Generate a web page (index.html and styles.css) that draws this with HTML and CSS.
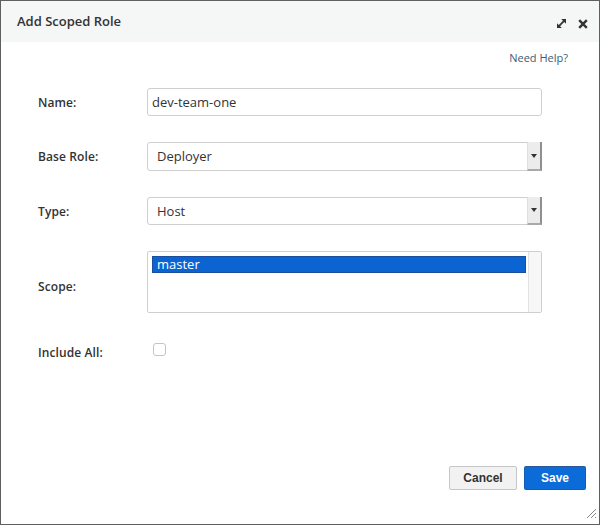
FILE: index.html
```html
<!DOCTYPE html>
<html>
<head>
<meta charset="utf-8">
<title>Add Scoped Role</title>
<link rel="stylesheet" href="styles.css">
</head>
<body>
<div class="dialog">
  <div class="header">
    <div class="title">Add Scoped Role</div>
    <div class="tools">
      <svg class="icon" width="11" height="11" viewBox="0 0 11 11">
        <path d="M2.2 8.8 L8.8 2.2" stroke="#333" stroke-width="1.8"/>
        <polygon points="5.2,1 10,1 10,5.8" fill="#333"/>
        <polygon points="1,5.2 1,10 5.8,10" fill="#333"/>
      </svg>
      <svg class="icon" width="10" height="10" viewBox="0 0 10 10">
        <path d="M1.2 1.2 L8.8 8.8 M8.8 1.2 L1.2 8.8" stroke="#333" stroke-width="2.4"/>
      </svg>
    </div>
  </div>
  <div class="body">
    <div class="help">Need Help?</div>
    <div class="form">
      <div class="label">Name:</div>
      <div class="field input">dev-team-one</div>

      <div class="label">Base Role:</div>
      <div class="field select">
        <span class="value">Deployer</span>
        <span class="arrow"><span class="tri"></span></span>
      </div>

      <div class="label">Type:</div>
      <div class="field select">
        <span class="value">Host</span>
        <span class="arrow"><span class="tri"></span></span>
      </div>

      <div class="label scope">Scope:</div>
      <div class="field listbox">
        <div class="options">
          <div class="option selected">master</div>
        </div>
        <div class="track"></div>
      </div>

      <div class="label include">Include All:</div>
      <div class="checkrow"><span class="checkbox"></span></div>
    </div>
  </div>
  <div class="footer">
    <button class="btn cancel">Cancel</button>
    <button class="btn save">Save</button>
    <svg class="grip" width="12" height="12" viewBox="0 0 12 12">
      <path d="M11 2 L2 11 M11 6 L6 11 M11 10 L10 11" stroke="#8a8a8a" stroke-width="1"/>
    </svg>
  </div>
</div>
</body>
</html>
```

FILE: styles.css
```css
* { box-sizing: border-box; }

html, body {
  margin: 0;
  padding: 0;
  background: #ffffff;
}

body {
  font-family: "Open Sans", "Liberation Sans", sans-serif;
  color: #333333;
}

.dialog {
  width: 600px;
  height: 525px;
  border: 1px solid #5f5f5f;
  display: flex;
  flex-direction: column;
  background: #ffffff;
}

.header {
  height: 41px;
  background: #f5f6f6;
  display: flex;
  align-items: center;
  justify-content: space-between;
  padding: 0 11px 0 16px;
  flex: none;
}

.title {
  font-size: 13px;
  font-weight: 600;
  color: #333333;
  margin-top: -1px;
}

.tools {
  display: flex;
  align-items: center;
  gap: 11px;
  margin-top: 4px;
}

.icon { display: block; }

.body {
  flex: 1;
  padding: 9px 31px 0 37px;
}

.help {
  text-align: right;
  font-size: 11px;
  line-height: 14px;
  color: #3d5b79;
}

.form {
  margin-top: 23px;
  display: grid;
  grid-template-columns: 109px 395px;
  grid-template-rows: 28px 29px 28px 62px 24px;
  row-gap: 26px;
  align-items: center;
}

.label {
  font-size: 12px;
  font-weight: 600;
  color: #333333;
  letter-spacing: 0.1px;
}

.label.scope { padding-top: 9px; }

.label.include { padding-top: 2px; }

.field {
  height: 100%;
  border: 1px solid #cfcfcf;
  border-radius: 3px;
  font-size: 13px;
  color: #333333;
  background: #ffffff;
}

.input {
  display: flex;
  align-items: center;
  padding-left: 4px;
  padding-bottom: 1px;
}

.select {
  display: flex;
  align-items: stretch;
  justify-content: space-between;
  padding-left: 9px;
  border-radius: 3px 2px 2px 3px;
}

.select .value {
  display: flex;
  align-items: center;
  padding-bottom: 1px;
}

.select .arrow {
  width: 15px;
  background: #ececec;
  border-left: 1px solid #dedede;
  border-right: 2px solid #8f8f8f;
  border-bottom: 2px solid #a9a9a9;
  display: flex;
  align-items: center;
  justify-content: center;
  margin: -1px -1px -1px 0;
}

.tri {
  width: 0;
  height: 0;
  border-left: 3px solid transparent;
  border-right: 3px solid transparent;
  border-top: 4px solid #333333;
}

.listbox {
  display: flex;
  padding: 4px 0 0 4px;
  border-radius: 2px;
}

.options { flex: 1; }

.option {
  height: 17px;
  line-height: 15px;
  padding-left: 4px;
  font-size: 13px;
}

.option.selected {
  background: #0b64d2;
  border: 1px solid #1b4f9c;
  color: #ffffff;
}

.track {
  width: 13px;
  margin: -4px 0 0 2px;
  background: #f7f7f7;
  border-left: 1px solid #e2e2e2;
}

.checkrow {
  display: flex;
  align-items: flex-start;
  height: 100%;
  padding: 4px 0 0 6px;
}

.checkbox {
  width: 13px;
  height: 13px;
  border: 1px solid #c4c4c4;
  border-radius: 3px;
  background: #ffffff;
}

.footer {
  flex: none;
  height: 58px;
  position: relative;
  display: flex;
  justify-content: flex-end;
  align-items: flex-start;
  gap: 7px;
  padding: 0 13px 0 0;
}

.btn {
  height: 24px;
  font-family: "Liberation Sans", Arial, sans-serif;
  font-size: 12px;
  font-weight: bold;
  border-radius: 2px;
  padding: 0;
  margin: 0;
}

.cancel {
  width: 68px;
  background: #f2f2f2;
  border: 1px solid #c6c6c6;
  color: #333333;
}

.save {
  width: 62px;
  background: #0b6bd8;
  border: 1px dotted #24508f;
  color: #ffffff;
}

.grip {
  position: absolute;
  right: 2px;
  bottom: 5px;
}
```
